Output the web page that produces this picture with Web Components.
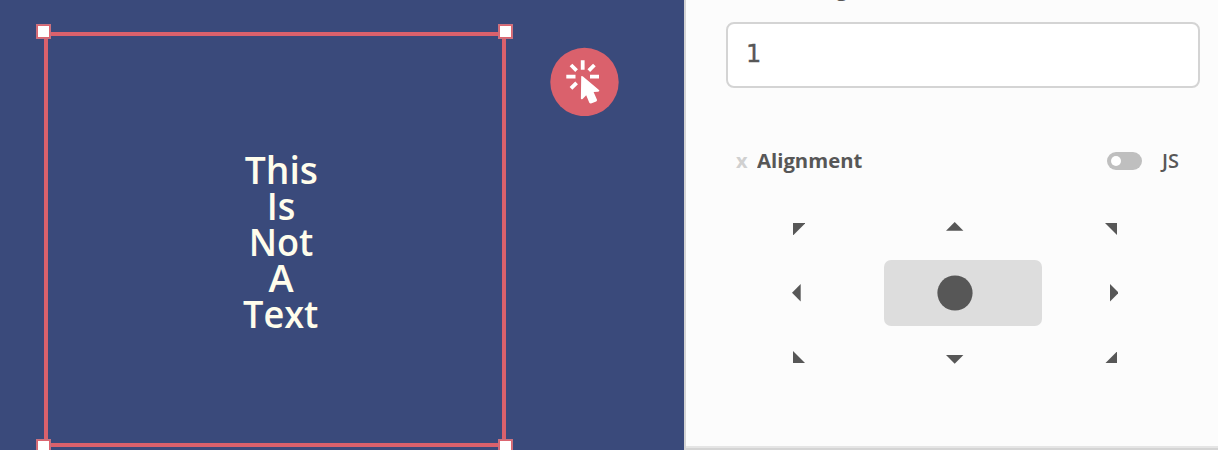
<!DOCTYPE html>
<html lang="en">
<head>
<meta charset="utf-8">
<title>Text widget editor</title>
<style>
html,body{margin:0;height:450px;overflow:hidden}
body{font-family:"Open Sans","Noto Sans",sans-serif;color:#575757}
</style>
</head>
<body>
<editor-app></editor-app>
<script>
const define = (name, html, setup) => customElements.define(name, class extends HTMLElement {
  constructor() {
    super();
    this.attachShadow({mode: "open"}).innerHTML = html;
  }
  connectedCallback() { if (setup) setup(this, this.shadowRoot); }
});

define("text-line", `<style>
:host{display:block;height:36px;line-height:36px;white-space:nowrap}
span{display:inline-block;transform:scaleX(var(--sx,1))}
</style><span><slot></slot></span>`);

define("selection-frame", `<style>
:host{display:flex;align-items:center;justify-content:center;position:relative;box-sizing:border-box;width:462px;height:415px;border:4px solid #da616c}
i{position:absolute;box-sizing:border-box;width:15px;height:15px;background:#fff;border:2px solid #dc6570;outline:1px solid #c9727f;outline-offset:-1px}
.tl{left:-12px;top:-12px}.tr{right:-11px;top:-12px}.bl{left:-12px;bottom:-11px}.br{right:-11px;bottom:-11px}
</style><slot></slot><i class="tl"></i><i class="tr"></i><i class="bl"></i><i class="br"></i>`);

define("click-badge", `<style>
:host{display:block;width:69px;height:69px}
svg{display:block}
</style><svg width="69" height="69" viewBox="550 47 69 69">
<circle cx="584.5" cy="82" r="34.2" fill="#da616c"/>
<path d="M582.7 60.3V69.7M566.3 76.6H575.5M590 76.6H599M571 65L576.6 70.6M594.4 65L588.8 70.6M571 88.4L576.6 82.8" stroke="#fff" stroke-width="3.8" fill="none"/>
<path d="M581.2 76.3Q582 75.5 583 76.4L599.3 90.3Q599.6 91.5 598 91.8L593.6 92.1L597 99.8Q597.2 101 596.2 101.6L591 103.4Q589.7 103.5 589.2 102.5L586.2 95.2L582.6 99Q581 99.8 580.9 98.5Z" fill="#fff"/>
</svg>`);

define("design-canvas", `<style>
:host{display:flex;align-items:flex-start;box-sizing:border-box;width:684px;height:450px;padding:32px 0 0 44px;background:#3a4a7b;overflow:hidden}
selection-frame{flex:none}
click-badge{margin:15px 0 0 44px}
.copy{text-align:center;font-size:38px;font-weight:600;color:#fffdec;margin:2px 0 0 12px}
</style>
<selection-frame><div class="copy">
<text-line style="--sx:.98">This</text-line><text-line style="--sx:.95">Is</text-line><text-line style="--sx:.95">Not</text-line><text-line>A</text-line><text-line style="--sx:.95">Text</text-line>
</div></selection-frame><click-badge></click-badge>`);

define("field-label", `<style>
:host{display:flex;align-items:center;height:30px;font-size:20px;line-height:30px;white-space:nowrap}
.x{width:21px;color:#d0d0d0;font-weight:700;margin-top:-1px}
b{font-weight:700;transform-origin:left;transform:scaleX(var(--sx,1.015))}
</style><span class="x">x</span><b><slot></slot></b>`);

define("toggle-switch", `<style>
:host{display:flex;align-items:center;box-sizing:border-box;width:35px;height:18px;border-radius:9px;background:#bfbfbf;padding:0 4px}
i{width:10px;height:10px;border-radius:50%;background:#fff}
</style><i></i>`);

define("value-input", `<style>
:host{display:flex;align-items:center;box-sizing:border-box;width:474px;height:66px;border:2px solid #d4d4d4;border-radius:8px;background:#fff;padding:0 18px;font:24px "DejaVu Sans",sans-serif}
span{display:block;margin-top:-3px;-webkit-text-stroke:.35px #575757}
</style><span><slot></slot></span>`);

const shapes = {
  nw: "0,0 12.5,0 0,12.5", ne: "0,0 12.5,0 12.5,12.5", sw: "0,0 0,12.5 12.5,12.5", se: "12.5,0 12.5,12.5 0,12.5",
  n: "0,8.7 8.7,0 17.4,8.7", s: "0,0 8.7,8.7 17.4,0", w: "8.7,0 0,8.7 8.7,17.4", e: "0,0 8.7,8.7 0,17.4"
};
define("align-option", `<style>
:host{display:flex;align-items:center;justify-content:center;box-sizing:border-box;height:66px;padding-right:16px;border-radius:7px}
:host([selected]){background:#ddd}
svg{display:block;fill:#575757}
</style><svg></svg>`, (host, root) => {
  const dir = host.getAttribute("dir-to"), svg = root.querySelector("svg");
  const [w, h] = dir === "c" ? [36, 36] : dir.length === 2 ? [12.5, 12.5] : "ns".includes(dir) ? [17.4, 8.7] : [8.7, 17.4];
  svg.setAttribute("width", w);
  svg.setAttribute("height", h);
  svg.innerHTML = dir === "c" ? '<circle cx="18" cy="18" r="17.6"/>' : `<polygon points="${shapes[dir]}"/>`;
});

define("align-grid", `<style>
:host{display:grid;grid-template-columns:repeat(3,158px);grid-template-rows:66px 66px 66px;row-gap:0}
[dir-to=nw],[dir-to=sw]{padding-right:12px}
[dir-to=ne],[dir-to=se]{padding-right:20.5px}
[dir-to=nw],[dir-to=ne]{padding-top:4px}
[dir-to=sw],[dir-to=se]{padding-bottom:4px}
[dir-to=n]{padding-bottom:1px}
[dir-to=s]{padding-top:1px}
[dir-to=w]{padding-right:17px}
[dir-to=e]{padding-right:14px}
</style>
<align-option dir-to="nw"></align-option><align-option dir-to="n"></align-option><align-option dir-to="ne"></align-option>
<align-option dir-to="w"></align-option><align-option dir-to="c" selected></align-option><align-option dir-to="e"></align-option>
<align-option dir-to="sw"></align-option><align-option dir-to="s"></align-option><align-option dir-to="se"></align-option>`);

define("property-panel", `<style>
:host{display:flex;flex-direction:column;box-sizing:border-box;width:534px;height:450px;background:#fcfcfc;border-left:2px solid #d4d4d4;padding-left:40px;overflow:hidden}
.above{margin:-26px 0 0 10px;flex:none;--sx:.98}
value-input{margin-top:18px;flex:none}
.row{display:flex;align-items:center;flex:none;width:445px;height:30px;margin:58px 0 0 10px}
toggle-switch{margin-left:auto}
.js{width:19px;margin-left:20px;font-size:20px;font-weight:600;line-height:30px}
align-grid{margin-top:18px}
footer{flex:none;margin:auto 0 0 -40px;height:2px;border-top:2px solid #e5e5e5;background:#d4d4d4}
</style>
<field-label class="above">Line Height</field-label>
<value-input>1</value-input>
<div class="row"><field-label>Alignment</field-label><toggle-switch></toggle-switch><span class="js">JS</span></div>
<align-grid></align-grid>
<footer></footer>`);

define("editor-app", `<style>:host{display:flex;width:1218px;height:450px;overflow:hidden}</style>
<design-canvas></design-canvas><property-panel></property-panel>`);
</script>
</body>
</html>
